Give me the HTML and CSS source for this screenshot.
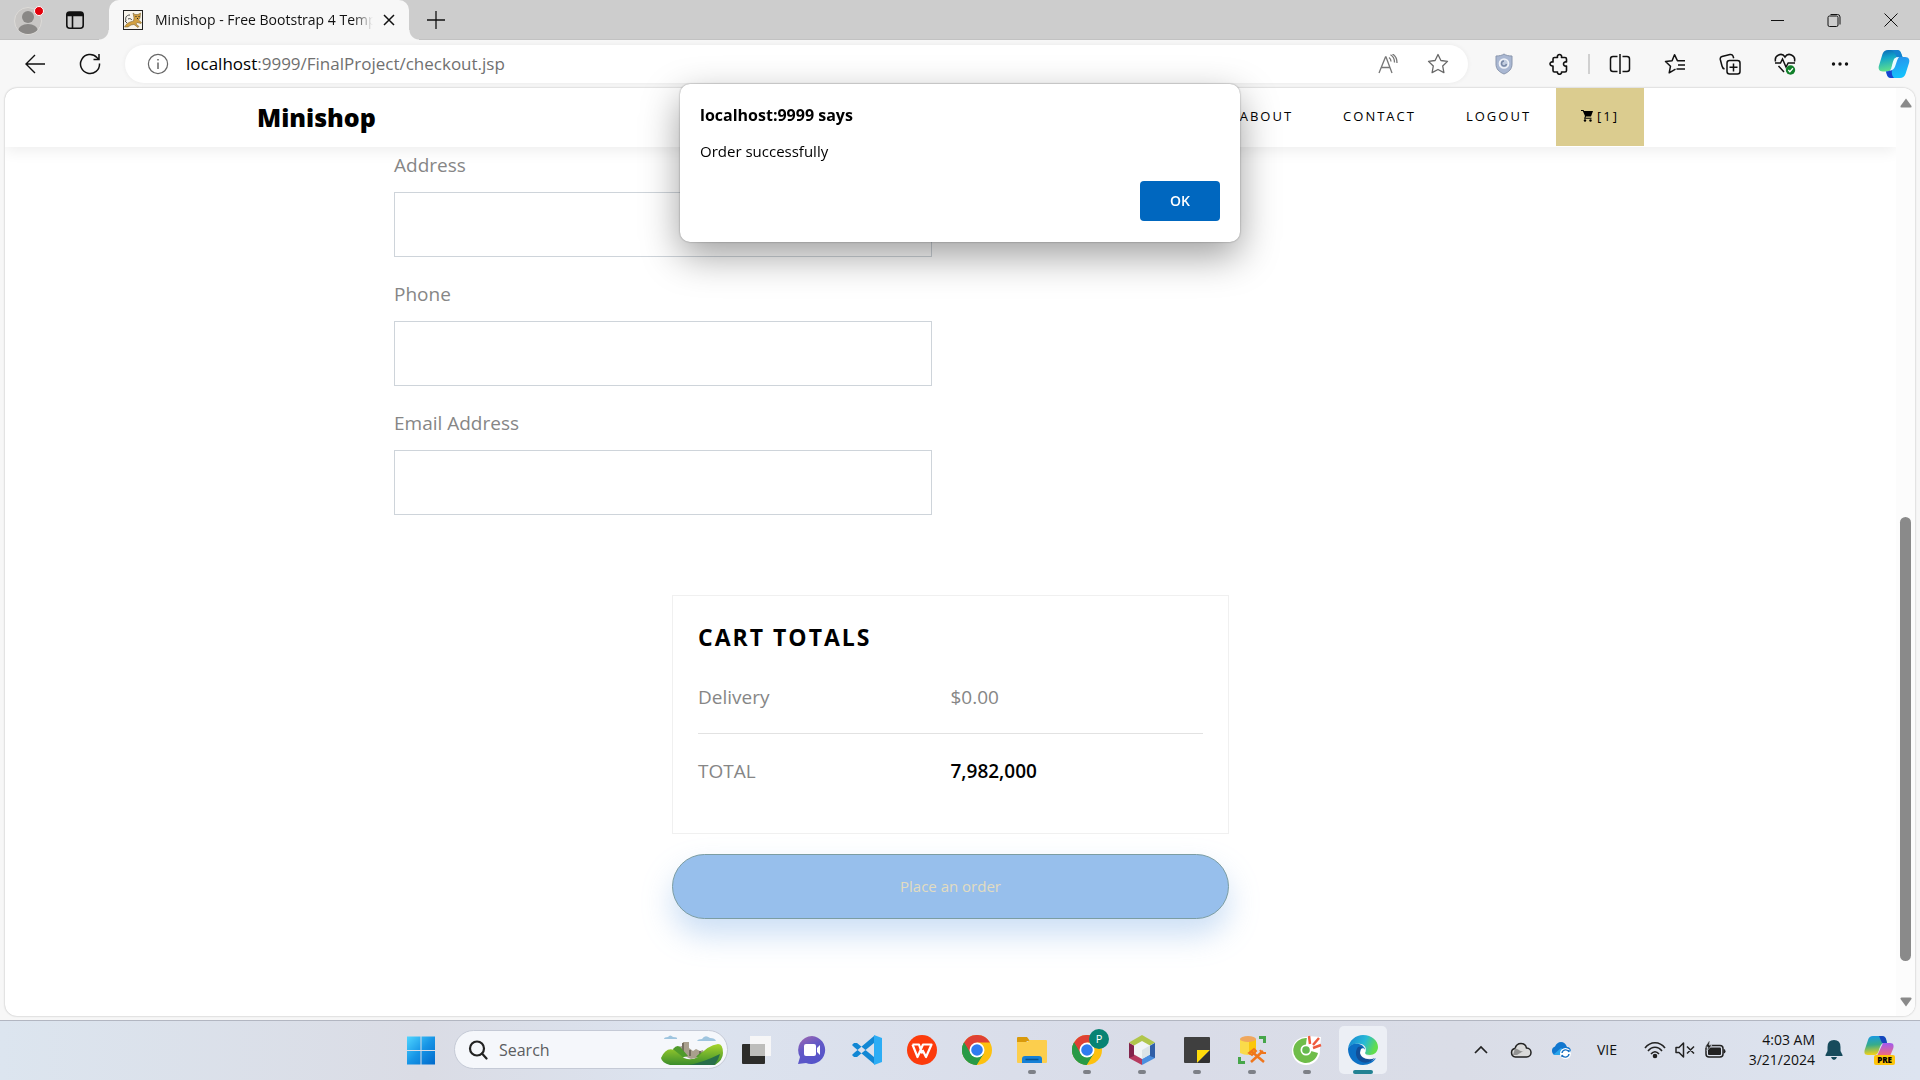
FILE: index.html
```html
<!DOCTYPE html>
<html lang="en">
<head>
<meta charset="utf-8">
<title>Minishop - Checkout</title>
<link rel="stylesheet" href="styles.css">
</head>
<body>
<div class="desktop">
  <header class="tabstrip">
    <button class="profile" aria-label="Profile">
      <svg width="30" height="30" viewBox="0 0 30 30"><defs><clipPath id="face"><circle cx="14" cy="16" r="13"/></clipPath></defs><circle cx="14" cy="16" r="13.5" fill="#c8c6c4" stroke="#dddbd8"/><g clip-path="url(#face)" fill="#8a8886"><circle cx="14" cy="12" r="6"/><ellipse cx="14" cy="26" rx="10" ry="7"/></g><circle cx="25" cy="6" r="4.5" fill="#e3000b" stroke="#fff"/></svg>
    </button>
    <button class="workspaces" aria-label="Tab actions">
      <svg width="20" height="20" viewBox="0 0 20 20" fill="none" stroke="#111" stroke-width="1.6"><rect x="1.8" y="2.8" width="16.400" height="15.400" rx="3"/><path d="M7.500 6v12"/><path d="M2 5.500V4.500a2.500 2.500 0 0 1 2.500-2.500h11A2.500 2.500 0 0 1 18 4.500v1z" fill="#111"/></svg>
    </button>
    <div class="tab">
      <svg class="favicon" width="20" height="20" viewBox="0 0 20 20"><rect x=".5" y=".5" width="19" height="19" fill="#f8f5ec" stroke="#222"/><path d="M1.500 17c2-4 5-5 9-6l.5-3-1-5 2 1.500h3L17.500 3l-.5 5-1.500 2 3 2.500-.5 1-4-1-1 1.500 3 2.500-1 1-4-3-3 .5-3 2z" fill="#d2a041" stroke="#6b5426" stroke-width=".5"/><path d="M3 11c-1-3 0-6 4-6M4 13l-2-2M5 9c2-1 3 0 4 1" fill="none" stroke="#444"/><path d="M12.500 6.500h1M15.500 6.500h1M14 8.500h1" stroke="#222"/></svg>
      <span class="tab-title">Minishop - Free Bootstrap 4 Template</span>
      <button class="tab-close" aria-label="Close tab"><svg width="12" height="12" viewBox="0 0 12 12" stroke="#111" stroke-width="1.500"><path d="M1 1l10 10M11 1L1 11"/></svg></button>
    </div>
    <button class="new-tab" aria-label="New tab"><svg width="18" height="18" viewBox="0 0 18 18" stroke="#111" stroke-width="1.300"><path d="M9 0v18M0 9h18"/></svg></button>
    <div class="window-buttons">
      <button aria-label="Minimize"><svg width="14" height="14" viewBox="0 0 14 14"><path d="M1 7.500h13" stroke="#111"/></svg></button>
      <button aria-label="Restore"><svg width="14" height="14" viewBox="0 0 14 14" fill="none" stroke="#111"><rect x="1" y="3" width="10" height="10.500" rx="1.500"/><path d="M3.500 1.500h7a2.500 2.500 0 0 1 2.500 2.500v7.500"/></svg></button>
      <button aria-label="Close"><svg width="14" height="14" viewBox="0 0 14 14" stroke="#111"><path d="M.5 .5l13 13M13.500 .5l-13 13"/></svg></button>
    </div>
  </header>

  <div class="toolbar">
    <button class="nav-button" aria-label="Back"><svg width="22" height="20" viewBox="0 0 22 20" fill="none" stroke="#111" stroke-width="1.400"><path d="M21 10H2M11 1L2 10l9 9"/></svg></button>
    <button class="nav-button" aria-label="Refresh"><svg width="22" height="22" viewBox="0 0 22 22" fill="none" stroke="#111" stroke-width="1.500"><path d="M20.500 10.500a9.500 9.500 0 1 1-2.600-6L20 6.500M20 1v5.500h-5.500"/></svg></button>
    <div class="address-bar">
      <svg width="22" height="22" viewBox="0 0 22 22" fill="none" stroke="#666" stroke-width="1.200"><circle cx="11" cy="11" r="9.600"/><path d="M11 9.500v6.500M11 6v1.600" stroke-width="1.500"/></svg>
      <span class="url"><b>localhost</b>:9999/FinalProject/checkout.jsp</span>
      <button class="in-bar" aria-label="Read aloud"><svg width="20" height="20" viewBox="0 0 20 20" fill="none" stroke="#777" stroke-width="1.300"><path d="M1 19L7.500 3h.5l6 16M3.500 13.500h8.500M11 3.500c1.500 1 2 2.500 2 4M12.500 .8c3 1.700 4 4 4 7.700M14.500 0c3.500 2 4.500 5 4.500 9"/></svg></button>
      <button class="in-bar" aria-label="Favorite"><svg width="22" height="22" viewBox="0 0 22 22" fill="none" stroke="#666" stroke-width="1.300" stroke-linejoin="round"><path d="M11 1.500l2.900 6 6.600.9-4.800 4.600 1.200 6.600L11 16.500l-5.900 3.100 1.200-6.600L1.500 8.400l6.600-.9z"/></svg></button>
    </div>
    <div class="tools">
      <button aria-label="Shield"><svg width="18" height="22" viewBox="0 0 18 22"><path d="M9 1c2 1.500 5 2 8 2v8c0 5-3 8-8 10-5-2-8-5-8-10V3c3 0 6-.5 8-2z" fill="#a9b7d2" stroke="#8a96ad"/><circle cx="9" cy="10.500" r="4.500" fill="#c3cee1" stroke="#f0f3f9" stroke-width="1.700"/><path d="M9 8a2.500 2.500 0 1 0 2.500 3" fill="none" stroke="#7888a6" stroke-width="1.500"/></svg></button>
      <button aria-label="Extensions"><svg width="22" height="22" viewBox="0 0 22 22" fill="none" stroke="#111" stroke-width="1.600" stroke-linejoin="round"><path d="M6.500 4.500h3c-1-4 5-4 4 0H17q1.500 0 1.500 1.500v3c-4-1-4 5 0 4v4.500q0 1.500-1.500 1.500h-3.500c.5 3-4.500 3-4 0h-3Q5 19 5 17.500V13c-4 .5-4-5 0-4V6q0-1.500 1.500-1.500z"/></svg></button>
      <span class="divider"></span>
      <button aria-label="Split screen"><svg width="22" height="22" viewBox="0 0 22 22" fill="none" stroke="#111" stroke-width="1.500"><path d="M11 1v20M8.500 3.500H4a2.500 2.500 0 0 0-2.500 2.500v10A2.500 2.500 0 0 0 4 18.500h4.500M13.500 3.500H18a2.500 2.500 0 0 1 2.500 2.500v10a2.500 2.500 0 0 1-2.500 2.500h-4.500"/></svg></button>
      <button aria-label="Favorites"><svg width="22" height="22" viewBox="0 0 22 22" fill="none" stroke="#111" stroke-width="1.500" stroke-linejoin="round"><path d="M11.500 16.200l-6.300 3.600 1.300-6.600-5-4.700 6.600-.8 2.400-6 2.900 6H21M14 12h7M12.500 16H21"/></svg></button>
      <button aria-label="Collections"><svg width="22" height="22" viewBox="0 0 22 22" fill="none" stroke="#111" stroke-width="1.500"><rect x="8" y="7.500" width="13" height="13.500" rx="2.500"/><path d="M14.500 10.500v8M10.500 14.300h8M5.500 16C3.800 15.500 3.300 14.500 3 13L1.300 6.500C1 5 1.500 4 3 3.500l8-2c1.500-.3 2.500.3 3 1.500l.7 2.300"/></svg></button>
      <button aria-label="Browser essentials"><svg width="22" height="22" viewBox="0 0 22 22" fill="none" stroke="#111" stroke-width="1.500"><path d="M1.500 8.500C0 2 8-1 11 4c3-5 11-2 9.500 4.500M1 10h5.500l2-4 3.500 8 2.200-4H21M4.500 13l5.500 6"/><circle cx="16.500" cy="17" r="4.700" fill="#10802a" stroke="none"/><path d="M14.300 17l1.600 1.700 3-3.400" stroke="#fff" stroke-width="1.300"/></svg></button>
      <button aria-label="More"><svg width="20" height="6" viewBox="0 0 20 6" fill="#111"><circle cx="3.500" cy="3" r="1.700"/><circle cx="10" cy="3" r="1.700"/><circle cx="16.500" cy="3" r="1.700"/></svg></button>
      <button class="copilot" aria-label="Copilot"><svg width="32" height="30" viewBox="0 0 32 30"><defs><linearGradient id="cpa" x2=".2" y2="1"><stop stop-color="#0b63b5"/><stop offset=".4" stop-color="#12a5c9"/><stop offset="1" stop-color="#5fe08c"/></linearGradient><linearGradient id="cpb" x2=".3" y2="1"><stop stop-color="#2a8bea"/><stop offset="1" stop-color="#15c0fb"/></linearGradient></defs><path d="M10 1h9q3 0 4 3l1.500 4h-4c-3 0-4 2-5 5l-1.500 5c-1 3-2.500 4.500-5 4.500H5c-4 0-5-3-4-6L4.500 5Q6 1 10 1z" fill="url(#cpa)"/><path d="M13 1h6q3 0 4 3l1.500 4h-6C17 4 16 2 13 1z" fill="#1583cf"/><path d="M22 29h-9q-3 0-4-3l-1-3.500c4 0 5-1.500 6-4.500l2-5c1-3 2-5 5-5h6c4 0 5 3 4 6l-3.500 11Q26 29 22 29z" fill="url(#cpb)"/><path d="M8 22.500c3 0 5-1 6-4 0 4-1 7 2 10.500h-3q-3 0-4-3z" fill="#1743cf"/><path d="M16 10c1-1 2-2 5-2-3 3-3 12-7 13l-2 1c2-3 2-8 4-12z" fill="#eafcff"/></svg></button>
    </div>
  </div>

  <div class="viewport">
    <div class="page">
      <nav class="navbar">
        <div class="navbar-inner">
          <a class="brand" href="#">Minishop</a>
          <div class="menu">
            <a href="#">About</a>
            <a href="#">Contact</a>
            <a href="#">Logout</a>
            <a class="cart" href="#"><svg width="12" height="12" viewBox="0 0 12 12"><path d="M0 0h2.500l.6 1H12l-2 5.500H5l-.5 1.200h6v1H3L4 6 1.800 1H0z"/><circle cx="4" cy="10.500" r="1.200"/><circle cx="9.500" cy="10.500" r="1.200"/></svg>[1]</a>
          </div>
        </div>
      </nav>
      <main class="checkout">
        <form class="billing">
          <div class="field"><label for="address">Address</label><input id="address" type="text"></div>
          <div class="field"><label for="phone">Phone</label><input id="phone" type="text"></div>
          <div class="field"><label for="email">Email Address</label><input id="email" type="text"></div>
        </form>
        <section class="summary">
          <div class="totals">
            <h3>Cart Totals</h3>
            <dl>
              <div class="line"><dt>Delivery</dt><dd>$0.00</dd></div>
              <div class="line total"><dt>TOTAL</dt><dd>7,982,000</dd></div>
            </dl>
          </div>
          <button class="place-order">Place an order</button>
        </section>
      </main>
    </div>
    <div class="scrollbar">
      <svg width="12" height="10" viewBox="0 0 12 10"><path d="M6 .5L11.500 8q.5 1.500-1 1.500h-9Q0 9.500.5 8z" fill="#8a8a8a"/></svg>
      <div class="track"><div class="thumb"></div></div>
      <svg width="12" height="10" viewBox="0 0 12 10"><path d="M6 9.500L.5 2Q0 .5 1.500.5h9Q12 .5 11.500 2z" fill="#8a8a8a"/></svg>
    </div>
  </div>

  <footer class="taskbar">
    <div class="apps">
      <button class="app" aria-label="Start"><svg width="30" height="30" viewBox="0 0 30 30"><defs><linearGradient id="win" x2="1" y2="1"><stop stop-color="#4fd5ff"/><stop offset=".5" stop-color="#1795e6"/><stop offset="1" stop-color="#0069cb"/></linearGradient></defs><path d="M1 1.500h13.500V15H1zM15.500 1.500H29V15H15.500zM1 16h13.500v13.500H1zM15.500 16H29v13.500H15.500z" fill="url(#win)"/></svg></button>
      <label class="search">
        <svg width="20" height="20" viewBox="0 0 20 20" fill="none" stroke="#222" stroke-width="2.200" stroke-linecap="round"><circle cx="9" cy="8.500" r="7"/><path d="M14 13.500l4.500 5"/></svg>
        <input type="text" placeholder="Search" aria-label="Search">
        <svg width="64" height="32" viewBox="0 0 64 32"><defs><linearGradient id="hill" x2="0" y2="1"><stop stop-color="#a8d52c"/><stop offset="1" stop-color="#3b8d2c"/></linearGradient></defs><path d="M4 5q0-2 4-2 2-3 5 0 5 0 4 2zM37 7q1-2 5-2 3-5 8-1 5 0 6 3z" fill="#9fc5df"/><path d="M16 18l2-5 4-1 1-4h6v6l4 3 3-2 4 2 3-1 2 6-14 3z" fill="#a99f8d"/><path d="M23 9v10M30 16v6M40 17v5" stroke="#756d5f" stroke-width="2"/><path d="M13 15q5-6 9 0l6 7-12 3zM36 23q4-5 8-5l5-3v8z" fill="#4f9a2b"/><path d="M1 24q5-11 13-8l10 8q7 3 14-1 10-12 20-13 5 0 5 9 0 7-8 12H10Q2 29 1 24z" fill="url(#hill)"/><path d="M28 31q14-2 32-11-2 7-6 11z" fill="#286f4a"/></svg>
      </label>
      <button class="app" aria-label="Task view"><svg width="30" height="30" viewBox="0 0 30 30"><rect y="9" width="23" height="20" rx="1" fill="#2d2d2b"/><path d="M8 1h21v20H8z" fill="#f7f7f7" fill-opacity=".93"/><path d="M8 9h15v12H8z" fill="#bdbdbb"/></svg></button>
      <button class="app" aria-label="Chat"><svg width="30" height="30" viewBox="0 0 30 30"><defs><linearGradient id="chat" x2=".5" y2="1"><stop stop-color="#a569ae"/><stop offset=".5" stop-color="#6258c6"/><stop offset="1" stop-color="#5554c9"/></linearGradient></defs><path d="M15 1a14 14 0 1 1-6 27l-8 1 2-7A14 14 0 0 1 15 1z" fill="url(#chat)"/><rect x="7" y="9" width="12" height="12" rx="2" fill="#fff"/><path d="M20 13l3-3v10l-3-3z" fill="#fff"/></svg></button>
      <button class="app" aria-label="Code"><svg width="30" height="30" viewBox="0 0 30 30"><path d="M0 10l2-2 3 0 17 14v7L2 12zM0 20l2 2 3 0L22 8V1L2 18z" fill="#1287d4"/><path d="M22 0l8 3v24l-8 3z" fill="#2cadf5"/></svg></button>
      <button class="app" aria-label="WPS"><svg width="30" height="30" viewBox="0 0 30 30"><circle cx="15" cy="15" r="15" fill="#fc3b0c"/><path d="M5.500 9.500h6.500l3 9M5.500 9.500l5 12.500L16 9.500h8.500l-5.500 12.500-3.500-7" fill="none" stroke="#fff" stroke-width="2.200" stroke-linejoin="round"/></svg></button>
      <button class="app" aria-label="Chrome"><svg width="30" height="30" viewBox="0 0 30 30"><g id="chrome"><circle cx="15" cy="15" r="15" fill="#fdc10f"/><path d="M15 15L2 7.500A15 15 0 0 0 14.500 30l7-11z" fill="#289a47"/><path d="M15 15L2 7.500A15 15 0 0 1 28 7.500H15z" fill="#df4034"/><path d="M2 7.500L8.500 18.700 15 7.500z" fill="#df4034"/><path d="M2 7.500l7 11.500 6 3 6-3L14.500 30A15 15 0 0 1 2 7.500z" fill="#289a47"/><circle cx="15" cy="15" r="7.500" fill="#fff"/><circle cx="15" cy="15" r="5.800" fill="#2e7cf0"/></g></svg></button>
      <button class="app running" aria-label="Files"><svg width="30" height="30" viewBox="0 0 30 30"><path d="M0 3q0-1 1-1h9l3 4h-3l-3 4H0z" fill="#d99a0c"/><path d="M0 7h10l3-2h16q1 0 1 1v21q0 1-1 1H1q-1 0-1-1z" fill="#fcce4d"/><path d="M5 28v-4q0-3 3-3h14q3 0 3 3v4z" fill="#1680d6"/><path d="M8.500 24.500h13" stroke="#07528f" stroke-width="1.500"/></svg></button>
      <button class="app running" aria-label="Chrome profile"><svg width="30" height="30" viewBox="0 0 30 30"><use href="#chrome"/></svg><span class="badge">P</span></button>
      <button class="app running" aria-label="NetBeans"><svg width="30" height="30" viewBox="0 0 30 30"><path d="M15 0l13 7.500L15 15 2 7.500z" fill="#b0c64b"/><path d="M2 8v15l13 7V15z" fill="#b63b5f"/><path d="M2 8l5 3v10l-5 2z" fill="#82244b"/><path d="M28 8v15l-13 7V15z" fill="#4a8fe0"/><path d="M28 8l-5 3v10l5 2z" fill="#315fa7"/><path d="M15 6l8 4.500v9L15 24l-8-4.500v-9z" fill="#f1f5f6"/><path d="M15 15v9l8-4.500v-9z" fill="#dce4e7"/></svg></button>
      <button class="app running" aria-label="Sticky notes"><svg width="30" height="30" viewBox="0 0 30 30"><path d="M3 2h24q1 0 1 1v12L15 28H3q-1 0-1-1V3q0-1 1-1z" fill="#3f3f3f"/><path d="M15 28V15h13z" fill="#ffdc0b"/><path d="M28 15v12q0 1-1 1H15z" fill="#303030"/></svg></button>
      <button class="app running" aria-label="Database tools"><svg width="30" height="30" viewBox="0 0 30 30"><path d="M3 4v14q8 4 16 0V4z" fill="#fadb4a"/><path d="M12 4v16q4 0 7-2V4z" fill="#fbc70c"/><ellipse cx="11" cy="4" rx="8" ry="3" fill="#efa75d"/><path d="M22 2.500h5.500V8M2.500 22v5.500H8" fill="none" stroke="#46a64a" stroke-width="3"/><path d="M14 27l12-11M14 16l13 11" stroke="#ef761d" stroke-width="2.500"/><path d="M12 18l5-4 2 2-4 4zM23 15l2 3 4 0" fill="none" stroke="#ef761d" stroke-width="2"/></svg></button>
      <button class="app running" aria-label="Coc Coc"><svg width="30" height="30" viewBox="0 0 30 30"><circle cx="14" cy="16" r="14" fill="#fff"/><path d="M15 3A12.500 12.500 0 1 0 26 18l-7-2-5-6z" fill="#6fbd4a"/><path d="M15 1l-1 15 14-2 1-12z" fill="#fff"/><path d="M17 1l1 8M27 3l-6 7M29 10l-8 3" stroke="#ef5b3e" stroke-width="2.500"/><circle cx="14" cy="15" r="5.500" fill="#fff"/><circle cx="14" cy="15" r="3.800" fill="#65ba4f"/></svg></button>
      <button class="app running active" aria-label="Edge"><svg width="30" height="30" viewBox="0 0 30 30"><defs><linearGradient id="edge" x2="1" y2=".3"><stop stop-color="#1682d2"/><stop offset=".6" stop-color="#27b9d7"/><stop offset="1" stop-color="#62dd4d"/></linearGradient></defs><path d="M0 14C1 5 8 0 15 0c9 0 15 6 15 12 0 5-4 8-8 8-3 0-5-1-5-2 2-3 1-8-4-9C7 8 1 10 0 14z" fill="url(#edge)"/><path d="M0 14c1-4 6-6 11-5 4 1 6 4 6 6-3-1-6 2-5 6 1 4 6 6 10 5q3 0 6-3c-2 4-7 7-13 7C7 30 0 23 0 14z" fill="#0c70c5"/><path d="M10 12c-4 5-2 13 4 15 5 2 10-1 13-4-7 3-15 0-15-6 0-2 1-4 3-5q-3-1-5 0z" fill="#124f99"/><path d="M17 18c1-3-1-6-4-4-1 2-1 5 1 7 3 3 8 2 11 1-3 0-8-1-8-4z" fill="#fff"/></svg></button>
    </div>
    <div class="tray">
      <button aria-label="Hidden icons"><svg width="14" height="10" viewBox="0 0 14 10" fill="none" stroke="#222" stroke-width="1.700"><path d="M1 8l6-6 6 6"/></svg></button>
      <button aria-label="Cloud"><svg width="22" height="16" viewBox="0 0 22 16"><path d="M5.500 15a4.300 4.300 0 0 1-.5-8.500C6 3 8 1.500 11 1.500s5 2 5.500 4.500c6 0 6 9 0 9z" fill="#dadada" stroke="#222" stroke-width="1.500"/><path d="M5 6.500c4 0 5 5 10 1.500L7 13H3z" fill="#929292"/></svg></button>
      <button aria-label="OneDrive"><svg width="22" height="18" viewBox="0 0 22 18"><path d="M5 14a4.500 4.500 0 0 1 0-8.500Q7 1 11 1t6 5q4 0 4 5l-3 3z" fill="#1177cf"/><path d="M3 14l8-7 7 5-3 2z" fill="#2aa5ec"/><circle cx="15.500" cy="12.500" r="5.500" fill="#fff"/><path d="M12 12a3.700 3.700 0 0 1 7-1v-2M19 13a3.700 3.700 0 0 1-7 1v2" fill="none" stroke="#176fc1" stroke-width="1.400"/></svg></button>
      <span class="language">VIE</span>
      <button class="quick" aria-label="Quick settings">
        <svg width="22" height="18" viewBox="0 0 22 18" fill="none" stroke="#222" stroke-width="1.600"><path d="M1 7c5.500-7 14.500-7 20 0M4 10c4-5 10-5 14 0M7 13c2.500-3 5.500-3 8 0"/><circle cx="11" cy="15" r="1.500" fill="#222"/></svg>
        <svg width="22" height="18" viewBox="0 0 22 18" fill="none" stroke="#222" stroke-width="1.500" stroke-linejoin="round"><path d="M2 6.500h3L9.500 2v14L5 11.500H2zM13 5.500l7 7M20 5.500l-7 7"/></svg>
        <svg width="22" height="18" viewBox="0 0 22 18"><rect x="2" y="4.500" width="17" height="11.500" rx="3" fill="none" stroke="#222" stroke-width="1.500"/><rect x="4" y="6.500" width="13" height="7.500" rx="1" fill="#222"/><path d="M19.500 8q2 0 2 2.200t-2 2.300z" fill="#222"/><path d="M5 0L1 6h3l-1 4 5-6H5l1-4z" fill="#222" stroke="#dfe4ee" stroke-width=".6"/></svg>
      </button>
      <div class="clock"><span>4:03 AM</span><span>3/21/2024</span></div>
      <button class="bell" aria-label="Notifications"><svg width="18" height="20" viewBox="0 0 18 20" fill="#174b5c"><path d="M9 0q6.500 0 6.500 7v4l2 4v1H.500v-1l2-4V7Q2.500 0 9 0zM6 17h6q-1 3-3 3t-3-3z"/></svg></button>
      <button class="preview" aria-label="Copilot preview">
        <svg width="32" height="30" viewBox="0 0 32 30"><defs><linearGradient id="pva" x2=".1" y2="1"><stop stop-color="#1698e8"/><stop offset=".5" stop-color="#37ac8a"/><stop offset="1" stop-color="#f0d11a"/></linearGradient><linearGradient id="pvb" x2="0" y2="1"><stop stop-color="#a05af0"/><stop offset="1" stop-color="#f66b78"/></linearGradient></defs><path d="M9 1h9q3 0 4 3l1 4h-3c-3 0-4 4-5 7s-2 5-5 5H4c-4 0-4-3-3-6L4 5q1-4 5-4z" fill="url(#pva)"/><path d="M15 1h3q3 0 4 3l1 4h-5z" fill="#1545bd"/><path d="M19 8h7c4 0 4 3 3 6l-3 7H13z" fill="url(#pvb)"/></svg>
        <span class="pre">PRE</span>
      </button>
    </div>
  </footer>
</div>

<div class="alert" role="alertdialog" aria-labelledby="alert-title">
  <h2 id="alert-title">localhost:9999 says</h2>
  <p>Order successfully</p>
  <button class="ok">OK</button>
</div>
</body>
</html>
```
FILE: styles.css
```css
* {
  box-sizing: border-box;
}

body {
  margin: 0;
  font-family: "Open Sans", "Noto Sans", sans-serif;
  background: #f7f7f7;
  color: #111;
}

button {
  display: flex;
  align-items: center;
  justify-content: center;
  padding: 0;
  border: 0;
  background: none;
  font-family: inherit;
}

a {
  color: inherit;
  text-decoration: none;
}

svg {
  display: block;
  flex: none;
}

.desktop {
  display: flex;
  flex-direction: column;
  min-height: 100vh;
}

/* Tab strip */
.tabstrip {
  display: flex;
  align-items: center;
  height: 40px;
  padding-left: 14px;
  background: #cdcdcd;
  box-shadow: inset 0 -1px #c2c2c2;
}

.workspaces {
  margin-left: 21px;
}

.tab {
  position: relative;
  display: flex;
  align-items: center;
  width: 300px;
  height: 40px;
  margin-left: 24px;
  padding: 0 14px;
  border-radius: 10px 10px 0 0;
  background: #f7f7f7;
}

.tab::before,
.tab::after {
  content: "";
  position: absolute;
  bottom: 0;
  width: 10px;
  height: 10px;
}

.tab::before {
  right: 100%;
  background: radial-gradient(circle at 0 0, #cdcdcd 9px, #f7f7f7 10px);
}

.tab::after {
  left: 100%;
  background: radial-gradient(circle at 100% 0, #cdcdcd 9px, #f7f7f7 10px);
}

.tab-title {
  flex: 1;
  margin: 0 10px 0 12px;
  overflow: hidden;
  font-size: 14px;
  line-height: 20px;
  white-space: nowrap;
  mask-image: linear-gradient(to left, transparent, #000 20px);
}

.new-tab {
  margin-left: 18px;
}

.window-buttons {
  display: flex;
  margin: 0 1px 0 auto;
}

.window-buttons button {
  width: 57px;
  height: 40px;
}

/* Toolbar */
.toolbar {
  display: flex;
  align-items: center;
  height: 47px;
  padding-left: 7px;
}

.nav-button {
  width: 55px;
  height: 40px;
}

.address-bar {
  display: flex;
  flex: 1;
  align-items: center;
  height: 38px;
  margin: 0 8px;
  padding: 0 19px 0 22px;
  border-radius: 19px;
  background: #fff;
  box-shadow: 0 0 5px rgba(0, 0, 0, 0.06);
}

.url {
  flex: 1;
  margin-left: 17px;
  font-size: 17px;
  line-height: 24px;
  color: #707070;
}

.url b {
  font-weight: 400;
  color: #000;
}

.in-bar {
  margin-left: 29px;
}

.tools {
  display: flex;
  align-items: center;
}

.tools button {
  width: 55px;
  height: 40px;
}

.tools .copilot {
  width: 53px;
}

.divider {
  width: 2px;
  height: 20px;
  margin: 0 2px;
  background: #d0d0d0;
}

/* Web page viewport */
.viewport {
  display: flex;
  flex: 1;
  margin: 1px 5px 4px;
  overflow: hidden;
  border-radius: 12px;
  background: #fff;
  box-shadow: 0 0 2px rgba(0, 0, 0, 0.3);
}

.page {
  flex: 1;
}

.navbar {
  padding: 0 20px;
  box-shadow: 0 4px 14px rgba(0, 0, 0, 0.07);
}

.navbar-inner {
  display: flex;
  align-items: flex-start;
  justify-content: space-between;
  max-width: 1387px;
  height: 59px;
  margin: 0 auto;
}

.brand {
  font-size: 25px;
  line-height: 58px;
  font-weight: 800;
  color: #000;
}

.menu {
  display: flex;
}

.menu a {
  display: flex;
  align-items: center;
  height: 58px;
  padding: 0 25px 2px;
  font-size: 13px;
  letter-spacing: 2px;
  text-transform: uppercase;
  color: #000;
}

.menu .cart {
  gap: 4px;
  background: #dbcc8f;
}

.checkout {
  max-width: 1113px;
  margin: 0 auto;
  padding-top: 5px;
}

.billing {
  display: grid;
  gap: 24px;
  width: 538px;
}

.field {
  display: grid;
  gap: 14px;
}

.field label {
  font-size: 19px;
  line-height: 26px;
  color: #868686;
}

.field input {
  width: 100%;
  height: 65px;
  padding: 0 20px;
  border: 1px solid #ced4da;
  background: #fff;
  font: inherit;
}

.summary {
  width: 557px;
  margin: 80px auto 0;
}

.totals {
  height: 239px;
  padding: 24px 25px;
  border: 1px solid #f0f0f0;
}

.totals h3 {
  margin: 0 0 18px;
  font-size: 23px;
  line-height: 34px;
  font-weight: 700;
  letter-spacing: 2px;
  text-transform: uppercase;
  color: #000;
}

.totals dl {
  margin: 0;
}

.line {
  display: grid;
  grid-template-columns: 1fr 1fr;
  padding: 8px 0 19px;
  font-size: 19px;
  line-height: 34px;
  color: #868686;
}

.line dd {
  margin: 0;
}

.total {
  padding-top: 20px;
  border-top: 1px solid #e2e2e2;
}

.total dd {
  font-weight: 600;
  color: #000;
}

.place-order {
  width: 100%;
  height: 65px;
  margin-top: 20px;
  padding-bottom: 2px;
  border: 1px solid #7c9da2;
  border-radius: 33px;
  background: #97bfec;
  box-shadow: 0 16px 30px rgba(120, 170, 230, 0.38);
  font-size: 15px;
  color: #e2dcc0;
}

.scrollbar {
  display: flex;
  flex-direction: column;
  align-items: center;
  width: 19px;
  padding: 10px 0 9px;
  background: #fcfcfc;
}

.track {
  display: flex;
  flex: 1;
  flex-direction: column;
  justify-content: flex-end;
  padding-bottom: 36px;
}

.thumb {
  width: 11px;
  height: 52%;
  border-radius: 6px;
  background: #8a8a8a;
}

/* Alert */
.alert {
  position: fixed;
  top: 84px;
  right: 0;
  left: 0;
  width: 560px;
  margin: 0 auto;
  padding: 19px 20px 21px;
  border-radius: 10px;
  background: #fff;
  box-shadow: 0 0 2px rgba(0, 0, 0, 0.4), 0 14px 38px rgba(0, 0, 0, 0.38);
  color: #000;
}

.alert h2 {
  margin: 0;
  font-size: 16px;
  line-height: 24px;
  font-weight: 700;
}

.alert p {
  margin: 12px 0 18px;
  font-size: 15px;
  line-height: 24px;
}

.ok {
  width: 80px;
  height: 40px;
  margin-left: auto;
  padding-bottom: 2px;
  border-radius: 4px;
  background: #0067bf;
  font-size: 14px;
  font-weight: 600;
  color: #fff;
}

/* Taskbar */
.taskbar {
  display: flex;
  align-items: center;
  justify-content: flex-end;
  height: 60px;
  padding: 0 24px 2px 0;
  border-top: 1px solid #b2b6c1;
  background: linear-gradient(90deg, #dce5ef, #dadce5 22%, #dce3ef 35%, #d9dce8 60%, #dadde7 76%, #dde4f0);
}

.apps {
  display: flex;
  align-items: center;
}

.app {
  position: relative;
  width: 55px;
  height: 48px;
}

.running::after {
  content: "";
  position: absolute;
  bottom: 0;
  width: 8px;
  height: 4px;
  border-radius: 2px;
  background: #7d8087;
}

.active {
  width: 48px;
  margin-left: 4px;
  border-radius: 5px;
  background: #eceff5;
}

.active::after {
  width: 20px;
  background: #238293;
}

.badge {
  position: absolute;
  top: 3px;
  right: 6px;
  width: 20px;
  height: 20px;
  border-radius: 10px;
  background: #078373;
  font-size: 11px;
  line-height: 20px;
  color: #fff;
}

.search {
  display: flex;
  align-items: center;
  width: 274px;
  height: 39px;
  margin: 0 2px 0 5px;
  padding: 0 3px 0 13px;
  border: 1px solid #c5cad6;
  border-radius: 20px;
  background: #f5f7fb;
}

.search input {
  flex: 1;
  min-width: 0;
  margin-left: 11px;
  padding: 0;
  border: 0;
  background: none;
  font-family: inherit;
  font-size: 16px;
}

.search input::placeholder {
  color: #5b5d61;
}

.tray {
  display: flex;
  align-items: center;
  margin-left: 87px;
}

.tray button {
  height: 40px;
}

.tray > button:nth-child(2) {
  margin-left: 22px;
}

.tray > button:nth-child(3) {
  margin-left: 18px;
}

.language {
  margin: 0 27px 0 25px;
  font-size: 14px;
}

.quick {
  gap: 8px;
}

.clock {
  display: flex;
  flex-direction: column;
  width: 78px;
  margin-left: 11px;
  font-size: 14px;
  line-height: 20px;
  text-align: right;
  white-space: nowrap;
}

.tray .bell {
  margin-left: 10px;
}

.tray .preview {
  position: relative;
  margin-left: 21px;
}

.pre {
  position: absolute;
  right: 1px;
  bottom: 5px;
  padding: 0 3px;
  border-radius: 2px;
  background: #fdc50b;
  font-size: 8px;
  line-height: 10px;
  font-weight: 800;
}
```
